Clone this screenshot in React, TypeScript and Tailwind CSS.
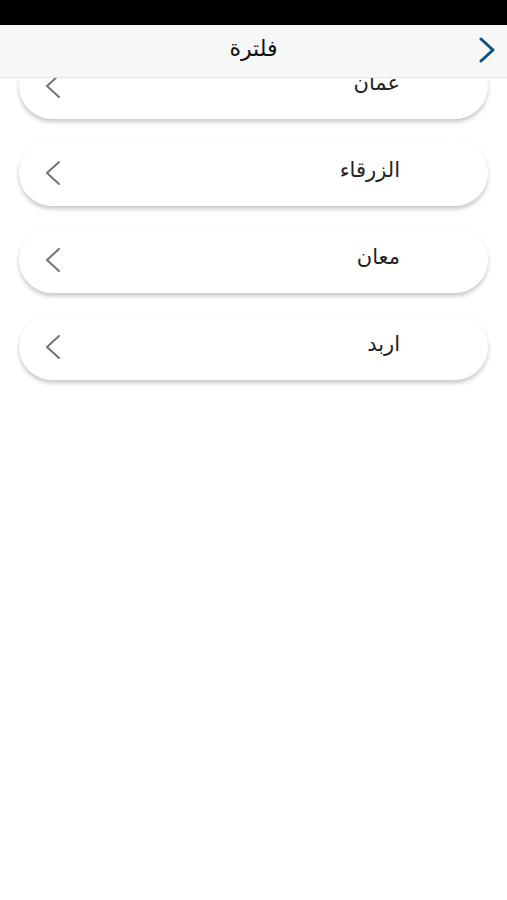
import React from 'react';

const cities = ['عمان', 'الزرقاء', 'معان', 'اربد'];

const Chevron: React.FC<{ className?: string; dir?: 'left' | 'right'; width?: number }> = ({ className, dir = 'left', width = 2 }) => (
  <svg className={className} viewBox="0 0 16 26" fill="none" stroke="currentColor" strokeWidth={width} strokeLinecap="round" strokeLinejoin="round">
    {dir === 'left' ? <path d="M14 2 L2 13 L14 24" /> : <path d="M2 2 L14 13 L2 24" />}
  </svg>
);

const App: React.FC = () => {
  return (
    <div className="w-[507px] h-[900px] bg-white overflow-hidden" style={{ fontFamily: '"DejaVu Sans", "Noto Sans", sans-serif' }}>
      <div className="h-[25px] bg-black" />
      <div className="relative">
        <header className="absolute top-0 left-0 right-0 z-10 h-[53px] bg-[#f7f7f7] border-b border-[#e6e6e6] flex items-center justify-center">
          <span className="text-[22px] text-[#111] -mt-[6px]" dir="rtl">فلترة</span>
          <button className="absolute right-[12px] top-[12px] text-[#0e4f86]">
            <Chevron dir="right" width={3} className="w-[16px] h-[26px]" />
          </button>
        </header>
        <div className="pt-[28px] px-[19px] flex flex-col gap-[21px]">
          {cities.map((c) => (
            <div
              key={c}
              className="h-[66px] rounded-full bg-white shadow-[0_3px_4px_rgba(0,0,0,0.22)] flex items-center justify-between pl-[26px] pr-[88px]"
            >
              <Chevron className="w-[16px] h-[26px] text-[#737373]" width={2} />
              <span className="text-[21px] text-[#222] -mt-[4px]" dir="rtl">{c}</span>
            </div>
          ))}
        </div>
      </div>
    </div>
  );
};

export default App;
